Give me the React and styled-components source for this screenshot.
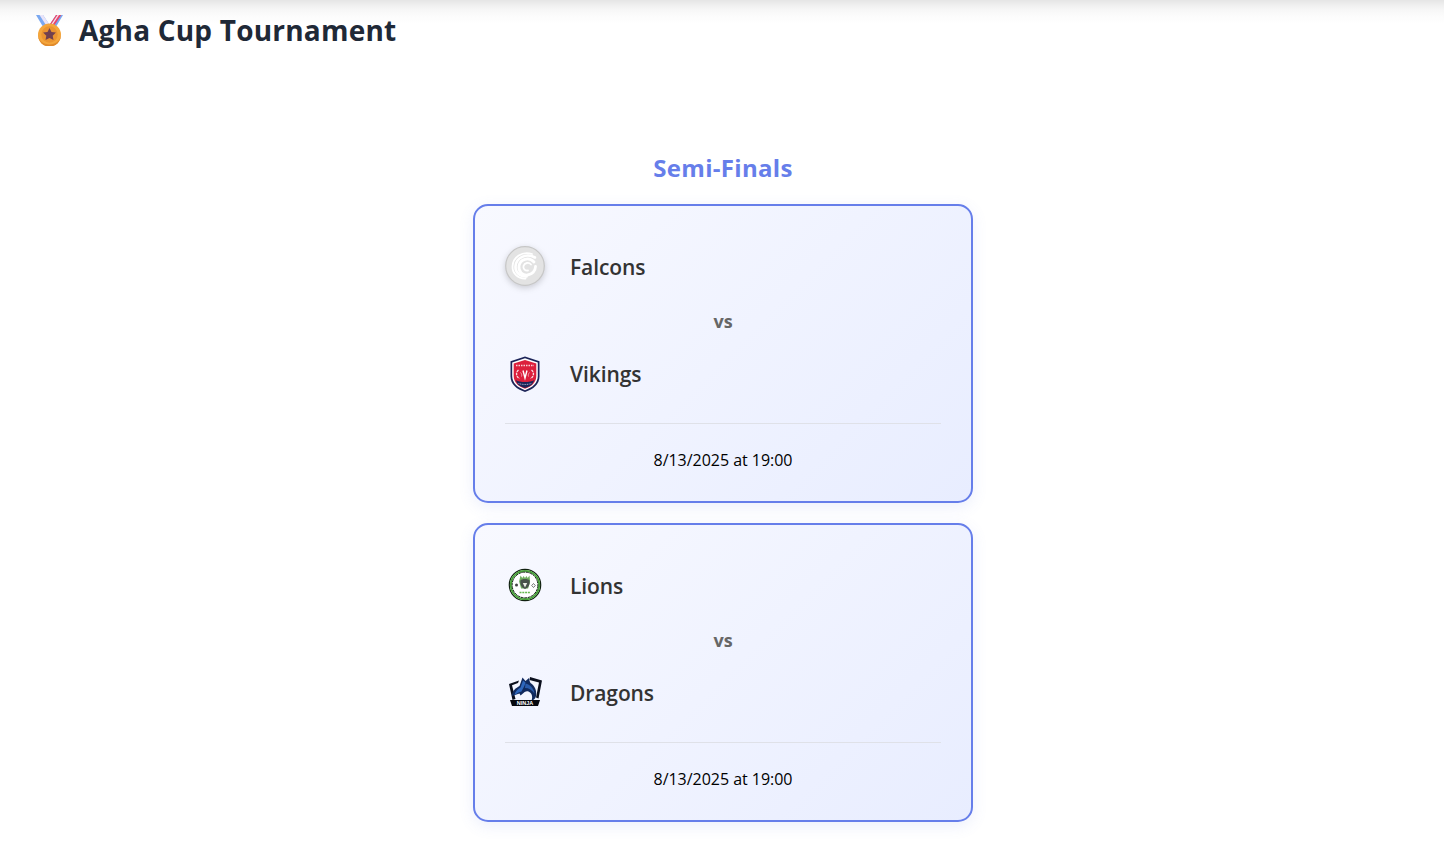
import React from 'react';
import styled, { createGlobalStyle } from 'styled-components';

const GlobalStyle = createGlobalStyle`
  html, body {
    margin: 0;
    padding: 0;
    background: #fff;
    font-family: "Open Sans", "Liberation Sans", sans-serif;
  }
`;

const Page = styled.div`
  height: 843px;
  overflow: hidden;
`;

const Header = styled.header`
  display: flex;
  align-items: center;
  gap: 14px;
  height: 60px;
  padding: 0 0 2px 33px;
  background: linear-gradient(180deg, #e5e5e5 0, #efefef 5px, #f7f7f7 10px, #fcfcfc 16px, #fff 24px);
`;

const Title = styled.h1`
  margin: 0;
  font-size: 28px;
  font-weight: 700;
  line-height: 36px;
  letter-spacing: 0.2px;
  color: #1f2937;
`;

const Bracket = styled.main`
  display: flex;
  flex-direction: column;
  align-items: center;
  gap: 20px;
  padding: 90px 0 0 2px;
`;

const RoundTitle = styled.h2`
  margin: 0;
  font-size: 24px;
  font-weight: 700;
  line-height: 32px;
  letter-spacing: 0.3px;
  color: #667eea;
`;

const Card = styled.section`
  box-sizing: border-box;
  width: 500px;
  height: 299px;
  padding: 30px;
  border: 2px solid #667eea;
  border-radius: 15px;
  background: linear-gradient(135deg, #f8f9ff 0%, #e8edff 100%);
  box-shadow: 0 4px 15px rgba(102, 126, 234, 0.12);
`;

const TeamRow = styled.div`
  display: flex;
  align-items: center;
  gap: 25px;
  height: 60px;
`;

const TeamName = styled.span`
  padding-top: 2px;
  font-size: 21px;
  font-weight: 600;
  letter-spacing: -0.1px;
  color: #333;
`;

const Versus = styled.div`
  height: 47px;
  line-height: 50px;
  text-align: center;
  font-size: 18px;
  font-weight: 700;
  letter-spacing: -0.1px;
  color: #666;
`;

const MatchTime = styled.div`
  margin-top: 20px;
  padding-top: 25px;
  border-top: 1px solid #dfe1e8;
  text-align: center;
  font-size: 16px;
  line-height: 22px;
  letter-spacing: -0.03px;
  color: #000;
`;

const Logo = styled.svg`
  display: block;
  flex: none;
  width: 40px;
  height: 40px;
`;

const ShadowLogo = styled(Logo)`
  overflow: visible;
  filter: drop-shadow(0 2px 3px rgba(0, 0, 0, 0.18));
`;

const MedalIcon = () => (
  <svg width="32" height="32" viewBox="0 -1 32 32" aria-hidden="true">
    <path d="M3 0h7l8 12-5.500 4z" fill="#7aa8f0" />
    <path d="M6.500 0h3.500l8 12-2.500 2z" fill="#e9e4f8" />
    <path d="M30 0h-7l-8 12 5.500 4z" fill="#7aa8f0" />
    <path d="M28.200 0h-5.200l-8 12 3.500 2.800z" fill="#e8466c" />
    <path d="M26 0h-1.500l-8 12 1 .8z" fill="#f3e3ee" />
    <circle cx="16.500" cy="20" r="11.500" fill="#f4a63c" />
    <path d="M5 20a11.500 11.500 0 0 0 23 0c-1 6-5.500 9.500-11.500 9.500S6 26 5 20z" fill="#e08a2c" />
    <circle cx="16.500" cy="19.500" r="8.200" fill="#ea9431" />
    <path d="M16.500 13l2 4 4.400.6-3.200 3.100.8 4.400-4-2.100-4 2.100.8-4.400-3.200-3.100 4.400-.6z" fill="#70404f" />
  </svg>
);

const FalconsLogo = () => (
  <ShadowLogo viewBox="0 0 40 40">
    <circle cx="20" cy="20" r="19.300" fill="#e3e3e3" stroke="#c6c6c6" strokeWidth="1.200" />
    <g fill="none" stroke="#fff" strokeLinecap="round">
      <path d="M27 8C17 5 8 11 7.500 20.500c-.3 7 6 12.500 13 12" strokeWidth="1.800" />
      <path d="M30 11.500C21 6.500 11 12 10.500 20.500c-.4 6 5 10.500 11 10" strokeWidth="2.600" />
      <path d="M29 16C24 10.500 15 13 14 20c-.8 6 4 9.500 8.500 9 4.500-.5 8-4 8-8.500" strokeWidth="2.800" />
      <path d="M26 18.500c-2-2.500-6.500-2-7.500 1.500-.7 3 1.800 5 4.500 4.500" strokeWidth="1.800" />
    </g>
  </ShadowLogo>
);

const VikingsLogo = () => (
  <Logo viewBox="0 0 40 40">
    <path d="M20 3.500l14.500 4.800v15c0 8-6 13-14.500 15.700-8.500-2.700-14.500-7.700-14.500-15.700v-15z" fill="#1c2458" />
    <path d="M20 5.300l12.800 4.200v13.600c0 7-5.400 11.700-12.800 14.100-7.400-2.400-12.800-7.100-12.800-14.100V9.500z" fill="#fff" />
    <path d="M20 7l11.300 3.600v12.400c0 6.300-4.700 10.500-11.300 12.800-6.600-2.300-11.300-6.500-11.300-12.800V10.600z" fill="#dc1f3c" />
    <path d="M11 12.500h18" stroke="#f8d3d9" strokeWidth="1.600" strokeDasharray="1.500 1" />
    <path d="M13.500 17c-3 2.500-2.500 6.500 1 8.500M26.500 17c3 2.500 2.500 6.500-1 8.500" fill="none" stroke="#f9dce0" strokeWidth="1.300" strokeDasharray="2.500 .8" />
    <path d="M15.500 19.500c1 1 1.500 2.500 1 4M24.500 19.500c-1 1-1.500 2.500-1 4" fill="none" stroke="#f2a6b1" strokeWidth="1" />
    <path d="M18 17.500l2 7.500 2-7.500" fill="none" stroke="#fff" strokeWidth="1.400" />
    <path d="M10.500 27c5 2.800 14 2.800 19 0l-2.500 4.500c-3 2.200-5.500 3-7 3.500-1.500-.5-4-1.300-7-3.500z" fill="#1c2458" />
    <path d="M13.500 30.500c4 1.300 9 1.300 13 0" fill="none" stroke="#c9cde6" strokeWidth="0.800" strokeDasharray="1 .7" />
  </Logo>
);

const LionsLogo = () => (
  <Logo viewBox="0 0 40 40">
    <circle cx="20" cy="20" r="15.700" fill="#fff" stroke="#10200f" strokeWidth="1.200" />
    <circle cx="20" cy="20" r="14.200" fill="none" stroke="#46a337" strokeWidth="1.800" />
    <circle cx="20" cy="20" r="12.900" fill="#fff" stroke="#10200f" strokeWidth="1" strokeDasharray="3 .6" />
    <path d="M15.500 10.500l1.800 2.500 1.300-2 1.400 2 1.400-2 1.300 2 1.800-2.500.6 6-2 7h-7l-2-7z" fill="#6fae5f" />
    <path d="M15.500 15.500c1-2 8-2 9 0 .8 3-.5 7-4.500 8.500-4-1.500-5.300-5.500-4.500-8.500z" fill="#47524a" />
    <path d="M17.800 18h4.400l-2.200 4.500z" fill="#e8eee4" />
    <circle cx="11.500" cy="20" r="1.500" fill="#444" />
    <path d="M28.500 18.500l1.800 2-1.800 2-1.800-2z" fill="none" stroke="#555" strokeWidth="0.800" />
    <path d="M14.500 27.500h11" stroke="#66b84f" strokeWidth="1.500" strokeDasharray="2 .8" />
  </Logo>
);

const DragonsLogo = () => (
  <Logo viewBox="0 0 40 40">
    <path d="M4 12l10-3.500-1 2.500-6 2.200 3.500 13.800-3 1z" fill="#0b0f1d" />
    <path d="M25 5l12 3.500-3.500 18-2.500-1 3-15-9.500-2.500z" fill="#0b0f1d" />
    <path d="M7 24c0-5.500 4-8 7.500-10l3-8.500 3 3.500L24 6c.5 2 .5 3.500 1.500 5 4 2.500 6.500 7 5.500 13-.5 2.500-2 4-4.500 4.500 1.500-3.500.5-7.500-3-9-2-.8-3.500 0-5 1.500l-3 2.500-1-2z" fill="#112a5e" />
    <path d="M9.500 23c.5-3.500 3.500-6 6-7.500l2.500-7 2.500 2c-.8 3.500-2.500 6-4 9l-3 1z" fill="#2e66bb" />
    <path d="M20.500 11.500c4.500 1 8.500 5 9 10-2.500-3.500-5.500-5.500-9.500-5.500z" fill="#2a5cab" />
    <path d="M5 28h30l-2 6H7z" fill="#05070d" />
    <text x="20" y="33" textAnchor="middle" fontFamily="Liberation Sans, sans-serif" fontSize="5.500" fontWeight="700" fill="#fff">NINJA</text>
  </Logo>
);

const matches = [
  { id: 1, home: ['Falcons', FalconsLogo], away: ['Vikings', VikingsLogo] },
  { id: 2, home: ['Lions', LionsLogo], away: ['Dragons', DragonsLogo] },
];

const Team = ({ team }) => {
  const [name, TeamLogo] = team;
  return (
    <TeamRow>
      <TeamLogo />
      <TeamName>{name}</TeamName>
    </TeamRow>
  );
};

const App = () => (
  <Page>
    <GlobalStyle />
    <Header>
      <MedalIcon />
      <Title>Agha Cup Tournament</Title>
    </Header>
    <Bracket>
      <RoundTitle>Semi-Finals</RoundTitle>
      {matches.map((match) => (
        <Card key={match.id}>
          <Team team={match.home} />
          <Versus>vs</Versus>
          <Team team={match.away} />
          <MatchTime>8/13/2025 at 19:00</MatchTime>
        </Card>
      ))}
    </Bracket>
  </Page>
);

export default App;
